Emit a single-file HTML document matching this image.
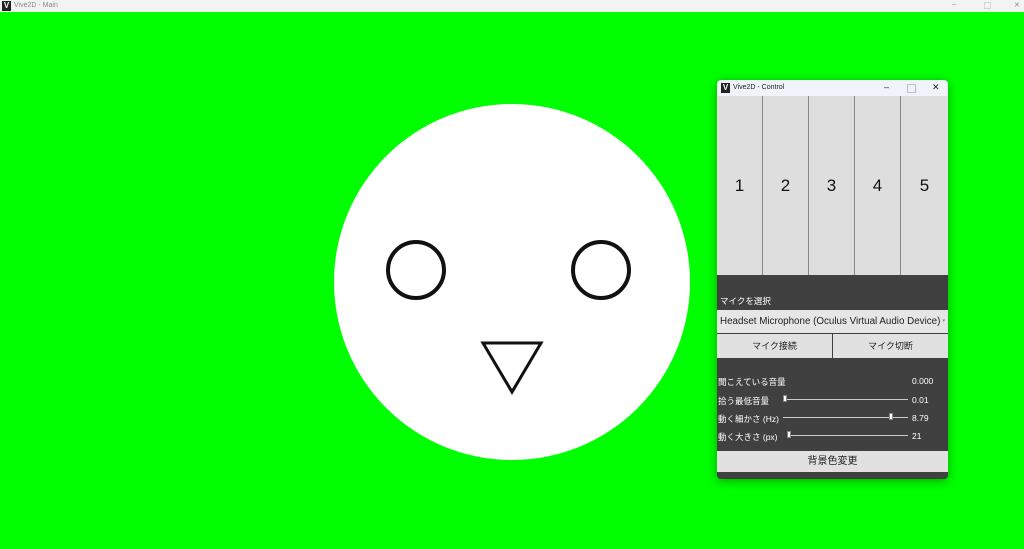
<!DOCTYPE html>
<html><head><meta charset="utf-8"><style>
*{margin:0;padding:0;box-sizing:border-box}
body{width:1024px;height:549px;background:#00ff00;position:relative;overflow:hidden;font-family:"Liberation Sans","Noto Sans CJK JP",sans-serif}
.tb{position:absolute;left:0;top:0;width:1024px;height:12px;background:#f3f3f3;font-size:7px;color:#888}
.a{position:absolute}
.win{position:absolute;left:717px;top:80px;width:231px;height:399px;background:#404040;border-radius:4px;box-shadow:0 2px 10px rgba(0,0,0,.35);overflow:hidden}
.wt{position:absolute;left:0;top:0;width:231px;height:16px;background:#f0f3f9;font-size:7px;color:#222}
.b{position:absolute;top:16px;height:179px;width:46px;background:#dedede;border-right:1px solid #888;font-size:17px;color:#111;text-align:center;line-height:179px}
.w{color:#fff;font-size:8.5px}
.btn{position:absolute;background:#e1e1e1;font-size:9px;color:#222;text-align:center}
.sl{position:absolute;height:1px;background:#ccc}
.k{position:absolute;width:4px;height:7px;background:#fff;border:1px solid #888}
</style></head><body>
<div class="tb"><div class="a" style="left:2px;top:1px;width:9px;height:10px;background:#222;color:#fff;font-size:8px;font-weight:bold;text-align:center;line-height:10px">V</div><span class="a" style="left:14px;top:2px">Vive2D - Main</span><span class="a" style="left:952px;top:1px">–</span><span class="a" style="left:984px;top:1px">▢</span><span class="a" style="left:1014px;top:1px">✕</span></div>
<svg class="a" style="left:0;top:0" width="1024" height="549">
<circle cx="512" cy="282" r="178" fill="#fff"/>
<circle cx="416" cy="270" r="28" fill="none" stroke="#111" stroke-width="4"/>
<circle cx="601" cy="270" r="28" fill="none" stroke="#111" stroke-width="4"/>
<polygon points="483,343 541,343 512,392" fill="none" stroke="#111" stroke-width="3"/>
</svg>
<div class="win">
<div class="wt"><div class="a" style="left:4px;top:3px;width:9px;height:10px;background:#222;color:#fff;font-size:8px;font-weight:bold;text-align:center;line-height:10px">V</div><span class="a" style="left:16px;top:4px">Vive2D - Control</span><span class="a" style="left:167px;top:2px;font-size:9px">–</span><span class="a" style="left:190px;top:2px;font-size:9px">▢</span><span class="a" style="left:215px;top:2px;font-size:9px">✕</span></div>
<div class="b" style="left:0">1</div><div class="b" style="left:46px">2</div><div class="b" style="left:92px">3</div><div class="b" style="left:138px">4</div><div class="b" style="left:184px;border:none;width:47px">5</div>
<div class="a w" style="left:3px;top:215px">マイクを選択</div>
<div class="btn" style="left:0;top:230px;width:231px;height:23px;text-align:left;padding-left:3px;line-height:23px;font-size:9.8px;background:#e6e6e6">Headset Microphone (Oculus Virtual Audio Device)<span class="a" style="right:3px;top:0;font-size:5px;color:#888">▾</span></div>
<div class="btn" style="left:0;top:254px;width:115px;height:24px;line-height:24px">マイク接続</div>
<div class="btn" style="left:116px;top:254px;width:115px;height:24px;line-height:24px">マイク切断</div>
<div class="a w" style="left:1px;top:296px">聞こえている音量</div><div class="a w" style="left:195px;top:296px">0.000</div>
<div class="a w" style="left:1px;top:315px">拾う最低音量</div><div class="sl" style="left:67px;top:319px;width:124px"></div><div class="k" style="left:66px;top:315px"></div><div class="a w" style="left:195px;top:315px">0.01</div>
<div class="a w" style="left:1px;top:333px">動く細かさ (Hz)</div><div class="sl" style="left:66px;top:337px;width:125px"></div><div class="k" style="left:172px;top:333px"></div><div class="a w" style="left:195px;top:333px">8.79</div>
<div class="a w" style="left:1px;top:351px">動く大きさ (px)</div><div class="sl" style="left:70px;top:355px;width:121px"></div><div class="k" style="left:70px;top:351px"></div><div class="a w" style="left:195px;top:351px">21</div>
<div class="btn" style="left:0;top:371px;width:231px;height:21px;line-height:21px;font-size:10px">背景色変更</div>
</div>
</body></html>
